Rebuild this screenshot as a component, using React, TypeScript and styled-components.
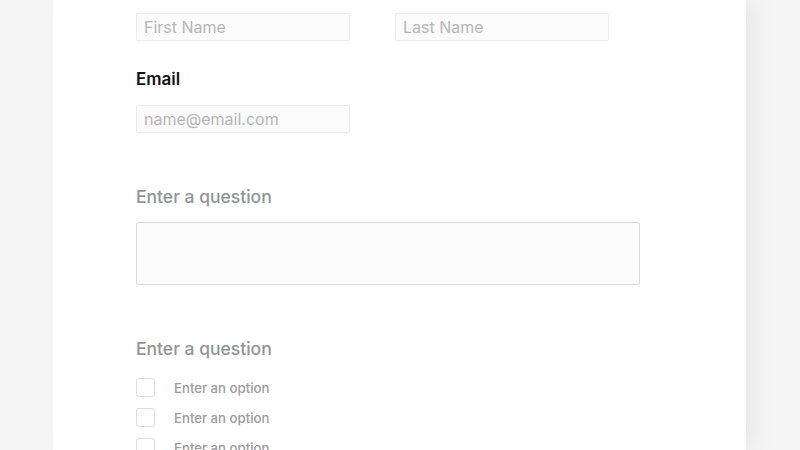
import React from "react";
import styled, { createGlobalStyle } from "styled-components";

const GlobalStyle = createGlobalStyle`
    html, body {
        margin: 0;
        padding: 0;
        background: #f5f5f5;
        font-family: "Inter", "Lato", sans-serif;
        overflow: hidden;
    }
`;

const Page = styled.div`
    width: 800px;
    height: 450px;
    background: #f5f5f5;
    display: flex;
`;

const Card = styled.div`
    margin-left: 53px;
    width: 693px;
    height: 450px;
    background: #ffffff;
    box-shadow: 10px 0 22px rgba(0, 0, 0, 0.05);
    padding: 13px 0 0 83px;
    box-sizing: border-box;
    display: flex;
    flex-direction: column;
    overflow: hidden;

    & > * {
        flex-shrink: 0;
    }
`;

const NameRow = styled.div`
    display: flex;
    gap: 45px;
`;

const TextInput = styled.div`
    width: 214px;
    height: 28px;
    box-sizing: border-box;
    border: 1px solid #ececec;
    border-radius: 2px;
    background: #fbfbfb;
    box-shadow: 0 1px 2px rgba(0, 0, 0, 0.03);
    padding: 0 7px;
    display: flex;
    align-items: center;
    color: #b6b6b6;
    font-size: 16px;
    font-weight: 400;
`;

const FieldLabel = styled.div`
    margin-top: 28px;
    margin-bottom: 16px;
    font-size: 17px;
    line-height: 20px;
    font-weight: 600;
    color: #111;
`;

const Question = styled.div`
    margin-top: 53px;
    font-size: 17.5px;
    line-height: 22px;
    font-weight: 500;
    color: #8e9696;
`;

const TextArea = styled.div`
    margin-top: 14px;
    width: 504px;
    height: 63px;
    box-sizing: border-box;
    border: 1px solid #d6dcdc;
    border-radius: 2px;
    background: #fcfcfc;
`;

const Options = styled.div`
    margin-top: 18px;
    display: flex;
    flex-direction: column;
    gap: 11px;
`;

const OptionRow = styled.div`
    display: flex;
    align-items: center;
    gap: 19px;
    height: 19px;
`;

const Box = styled.div`
    width: 19px;
    height: 19px;
    box-sizing: border-box;
    border: 1px solid #dcdcdc;
    border-radius: 3px;
    background: #fff;
`;

const OptionText = styled.span`
    font-size: 13.2px;
    font-weight: 500;
    color: #9c9c9c;
`;

export default function App() {
    return (
        <Page>
            <GlobalStyle />
            <Card>
                <NameRow>
                    <TextInput>First Name</TextInput>
                    <TextInput>Last Name</TextInput>
                </NameRow>

                <FieldLabel>Email</FieldLabel>
                <TextInput>name@email.com</TextInput>

                <Question>Enter a question</Question>
                <TextArea />

                <Question>Enter a question</Question>
                <Options>
                    {[0, 1, 2].map((i) => (
                        <OptionRow key={i}>
                            <Box />
                            <OptionText>Enter an option</OptionText>
                        </OptionRow>
                    ))}
                </Options>
            </Card>
        </Page>
    );
}
